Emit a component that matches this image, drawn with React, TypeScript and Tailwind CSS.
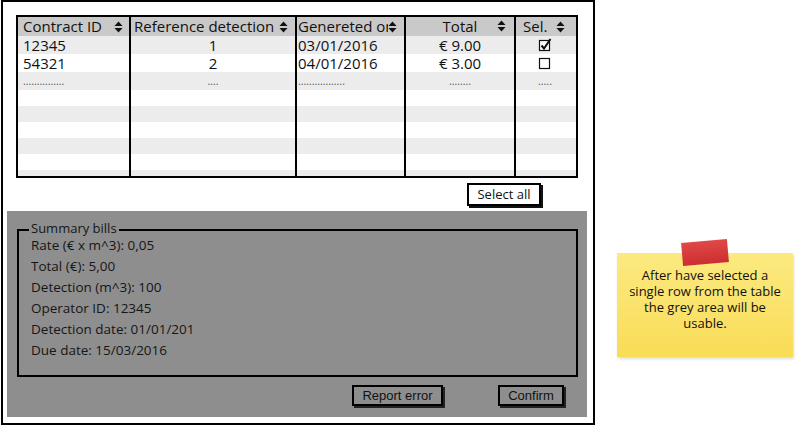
import React from 'react';

const SortIcon = () => (
    <svg width="9" height="12" viewBox="0 0 9 12" className="shrink-0">
        <path d="M0.5 5 L4.5 0.5 L8.5 5 Z" fill="#111" />
        <path d="M0.5 7 L4.5 11.5 L8.5 7 Z" fill="#111" />
    </svg>
);

const Checkbox = ({ checked }: { checked: boolean }) => (
    <svg width="14" height="14" viewBox="0 0 14 14">
        <rect x="1.5" y="2.5" width="10" height="10" fill="white" stroke="#111" strokeWidth="1.2" />
        {checked && <path d="M3.5 7.5 L6 10.5 L12.5 1" fill="none" stroke="#111" strokeWidth="2" />}
    </svg>
);

const cols = 'grid grid-cols-[111px_166px_109px_110px_62px]';
const cell = 'border-l-2 border-black';

const rows = [
    { id: '12345', ref: '1', date: '03/01/2016', total: '€ 9.00', sel: 'checked' },
    { id: '54321', ref: '2', date: '04/01/2016', total: '€ 3.00', sel: 'empty' },
    { id: '...............', ref: '....', date: '.................', total: '........', sel: 'dots' },
    {}, {}, {}, {}, {}, {},
] as { id?: string; ref?: string; date?: string; total?: string; sel?: string }[];

const heights = ['h-[18px]', 'h-[18px]', 'h-[18px]', 'h-[16px]', 'h-[16px]', 'h-[16px]', 'h-[16px]', 'h-[16px]', 'h-[16px]'];

const Table = () => (
    <div className="ml-[13px] mt-[13px] h-[163px] w-[562px] overflow-hidden border-2 border-black text-[15px] leading-none text-[#111]">
        <div className={`${cols} h-[19px] bg-[#c9c9c9]`}>
            <div className="flex items-center justify-between pl-[5px] pr-[6px]">
                <span>Contract ID</span>
                <SortIcon />
            </div>
            <div className={`${cell} flex items-center justify-between pl-[3px] pr-[7px]`}>
                <span>Reference detection</span>
                <SortIcon />
            </div>
            <div className={`${cell} flex items-center pl-[1px] pr-[7px]`}>
                <span className="w-[90px] overflow-hidden whitespace-nowrap">Genereted on</span>
                <SortIcon />
            </div>
            <div className={`${cell} relative flex items-center justify-center`}>
                <span>Total</span>
                <span className="absolute right-[8px] top-[3px]">
                    <SortIcon />
                </span>
            </div>
            <div className={`${cell} flex items-center justify-between pl-[7px] pr-[11px]`}>
                <span>Sel.</span>
                <SortIcon />
            </div>
        </div>
        {rows.map((r, i) => {
            const dots = r.sel === 'dots' ? 'text-[10.5px] text-[#555]' : '';
            return (
                <div key={i} className={`${cols} ${heights[i]} ${i % 2 === 0 ? 'bg-[#ececec]' : 'bg-white'}`}>
                    <div className={`flex items-center pl-[5px] ${dots}`}>{r.id}</div>
                    <div className={`${cell} flex items-center justify-center ${dots}`}>{r.ref}</div>
                    <div className={`${cell} flex items-center pl-[1px] ${dots}`}>{r.date}</div>
                    <div className={`${cell} flex items-center justify-center ${dots}`}>{r.total}</div>
                    <div className={`${cell} flex items-center justify-center pr-[2px]`}>
                        {r.sel === 'checked' && <Checkbox checked />}
                        {r.sel === 'empty' && <Checkbox checked={false} />}
                        {r.sel === 'dots' && <span className="text-[10.5px] text-[#555]">.....</span>}
                    </div>
                </div>
            );
        })}
    </div>
);

const summary = [
    'Rate (€ x m^3): 0,05',
    'Total (€): 5,00',
    'Detection (m^3): 100',
    'Operator ID: 12345',
    'Detection date: 01/01/2016',
    'Due date: 15/03/2016',
];

const GrayButton = ({ label, w }: { label: string; w: string }) => (
    <button
        className={`${w} flex h-[21px] items-center justify-center border-2 border-black bg-[#8e8e8e] font-['Liberation_Sans',sans-serif] text-[13px] text-[#111] shadow-[2px_2px_0_#222]`}
    >
        {label}
    </button>
);

export default function App() {
    return (
        <div className="flex h-[426px] w-[795px] items-start bg-white font-['Open_Sans',sans-serif]">
            <div className="ml-[1px] flex h-[425px] w-[594px] flex-col border-2 border-black">
                <Table />
                <button className="ml-[464px] mt-[5px] flex h-[23px] w-[74px] items-center justify-center border-2 border-black bg-white text-[13px] text-[#111] shadow-[2px_2px_0_#111]">
                    Select all
                </button>
                <div className="ml-[4px] mt-[5px] flex h-[206px] w-[580px] flex-col bg-[#8e8e8e]">
                    <div className="relative ml-[10px] mt-[18px] h-[148px] w-[561px] border-2 border-black pl-[12px] pt-[4px] text-[13.5px] leading-[21px] text-[#161616]">
                        <span className="absolute left-[10px] top-[-12px] bg-[#8e8e8e] px-[2px] text-[13px] leading-[18px]">Summary bills</span>
                        {summary.map((s) => (
                            <div key={s} className="w-[162px] overflow-hidden whitespace-nowrap">
                                {s}
                            </div>
                        ))}
                    </div>
                    <div className="ml-[345px] mt-[8px] flex gap-[55px]">
                        <GrayButton label="Report error" w="w-[91px]" />
                        <GrayButton label="Confirm" w="w-[66px]" />
                    </div>
                </div>
            </div>
            <div className="relative ml-[22px] mt-[253px] flex h-[104px] w-[176px] flex-col items-center bg-gradient-to-b from-[#fcea80] to-[#f9dc55] pt-[14px] text-center text-[13px] leading-[16px] text-[#111] shadow-[1px_2px_3px_rgba(0,0,0,0.15)]">
                <div className="absolute left-[65px] top-[-12px] h-[23px] w-[46px] -rotate-[5deg] bg-gradient-to-b from-[#e04848] to-[#cc2e30]" />
                <p className="w-[170px]">
                    After have selected a
                    <br />
                    single row from the table
                    <br />
                    the grey area will be
                    <br />
                    usable.
                </p>
            </div>
        </div>
    );
}
